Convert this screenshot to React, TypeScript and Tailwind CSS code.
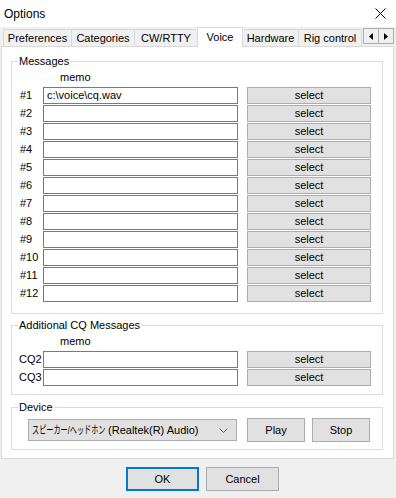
import React from "react";

const rows = [
  "c:\\voice\\cq.wav",
  "",
  "",
  "",
  "",
  "",
  "",
  "",
  "",
  "",
  "",
  "",
];

function MsgRow({ label, value }: { label: string; value: string }) {
  return (
    <div className="flex items-center h-[17px]">
      <span className="w-[23px] shrink-0 leading-[17px]">{label}</span>
      <div className="w-[195px] h-[17px] shrink-0 border border-[#7a7a7a] bg-white px-[3px] leading-[15px] whitespace-nowrap">
        {value}
      </div>
      <button className="ml-[9px] w-[124px] h-[17px] shrink-0 border border-[#adadad] bg-[#e1e1e1] leading-[15px]">
        select
      </button>
    </div>
  );
}

function Group({
  title,
  className,
  children,
}: {
  title: string;
  className: string;
  children: React.ReactNode;
}) {
  return (
    <div className={`relative w-[372px] border border-[#dcdcdc] ${className}`}>
      <span className="absolute -top-[7px] left-[6px] bg-white px-[1px] leading-[13px]">
        {title}
      </span>
      {children}
    </div>
  );
}

const tabs = [
  { name: "Preferences", w: "w-[69px]" },
  { name: "Categories", w: "w-[64px]" },
  { name: "CW/RTTY", w: "w-[64px]" },
  { name: "Voice", w: "w-[46px]", active: true },
  { name: "Hardware", w: "w-[57px]" },
  { name: "Rig control", w: "w-[64px]" },
];

export default function App() {
  return (
    <div className="w-[396px] h-[498px] bg-[#f0f0f0] text-[11px] text-black font-['Liberation_Sans','Noto_Sans_CJK_JP',sans-serif] overflow-hidden">
      {/* title bar */}
      <div className="h-[27px] bg-white flex items-center justify-between pl-[4px] pr-[10px]">
        <span className="text-[12px]">Options</span>
        <svg width="11" height="11" viewBox="0 0 11 11">
          <path d="M0.5 0.5 L10.5 10.5 M10.5 0.5 L0.5 10.5" stroke="#000" strokeWidth="1" />
        </svg>
      </div>

      {/* tabs */}
      <div className="flex items-end h-[19px] pl-[3px]">
        {tabs.map((t, i) =>
          t.active ? (
            <div
              key={t.name}
              className={`${t.w} relative z-10 -ml-px -mb-px h-[20px] bg-white border-t border-l border-r border-[#d9d9d9] flex items-center justify-center pb-[1px]`}
            >
              {t.name}
            </div>
          ) : (
            <div
              key={t.name}
              className={`${t.w} ${i > 0 ? "-ml-px" : ""} h-[17px] bg-[#f0f0f0] border-t border-l border-r border-[#d9d9d9] flex items-center justify-center`}
            >
              {t.name}
            </div>
          )
        )}
        <div className="self-start mt-[1px] ml-[1px] flex">
          <div className="w-[16px] h-[16px] border border-[#adadad] bg-[#f0f0f0] flex items-center justify-center">
            <svg width="4" height="7" viewBox="0 0 4 7">
              <path d="M4 0 L0 3.5 L4 7 Z" fill="#000" />
            </svg>
          </div>
          <div className="w-[16px] h-[16px] -ml-px border border-[#adadad] bg-[#f0f0f0] flex items-center justify-center">
            <svg width="4" height="7" viewBox="0 0 4 7">
              <path d="M0 0 L4 3.5 L0 7 Z" fill="#000" />
            </svg>
          </div>
        </div>
      </div>

      {/* panel */}
      <div className="ml-[1px] w-[393px] bg-white border border-[#d9d9d9] pt-[14px] pb-[8px] pl-[9px]">
        <Group title="Messages" className="pt-[9px] pb-[11px] pl-[8px]">
          <div className="pl-[40px] leading-[13px]">memo</div>
          <div className="mt-[3px] flex flex-col gap-[1px]">
            {rows.map((v, i) => (
              <MsgRow key={i} label={`#${i + 1}`} value={v} />
            ))}
          </div>
        </Group>

        <Group title="Additional CQ Messages" className="mt-[11px] pt-[9px] pb-[8px] pl-[7px]">
          <div className="pl-[41px] leading-[13px]">memo</div>
          <div className="mt-[3px] flex flex-col gap-[1px]">
            <div className="flex items-center h-[17px]">
              <span className="w-[24px] shrink-0">CQ2</span>
              <div className="w-[195px] h-[17px] border border-[#7a7a7a] bg-white" />
              <button className="ml-[9px] w-[124px] h-[17px] border border-[#adadad] bg-[#e1e1e1] leading-[15px]">
                select
              </button>
            </div>
            <div className="flex items-center h-[17px]">
              <span className="w-[24px] shrink-0">CQ3</span>
              <div className="w-[195px] h-[17px] border border-[#7a7a7a] bg-white" />
              <button className="ml-[9px] w-[124px] h-[17px] border border-[#adadad] bg-[#e1e1e1] leading-[15px]">
                select
              </button>
            </div>
          </div>
        </Group>

        <Group title="Device" className="mt-[12px] pt-[10px] pb-[7px] pl-[16px]">
          <div className="flex items-center h-[24px]">
            <div className="w-[209px] h-[22px] border border-[#adadad] bg-[#e1e1e1] flex items-center justify-between pl-[3px] pr-[8px] whitespace-nowrap">
              <span className="flex items-center">
                <span className="inline-block w-[73px] overflow-visible">
                  <span className="inline-block origin-left scale-x-[0.65] whitespace-nowrap">
                    スピーカー/ヘッドホン
                  </span>
                </span>
                <span>&nbsp;(Realtek(R) Audio)</span>
              </span>
              <svg width="9" height="5" viewBox="0 0 9 5">
                <path d="M0.5 0.5 L4.5 4.5 L8.5 0.5" stroke="#606060" strokeWidth="1" fill="none" />
              </svg>
            </div>
            <button className="ml-[10px] w-[58px] h-[24px] border border-[#adadad] bg-[#e1e1e1]">
              Play
            </button>
            <button className="ml-[7px] w-[58px] h-[24px] border border-[#adadad] bg-[#e1e1e1]">
              Stop
            </button>
          </div>
        </Group>
      </div>

      {/* dialog buttons */}
      <div className="flex mt-[8px] pl-[126px] gap-[7px]">
        <button className="w-[73px] h-[24px] border-2 border-[#0078d7] bg-[#e1e1e1]">OK</button>
        <button className="w-[73px] h-[24px] border border-[#adadad] bg-[#e1e1e1]">Cancel</button>
      </div>
    </div>
  );
}
